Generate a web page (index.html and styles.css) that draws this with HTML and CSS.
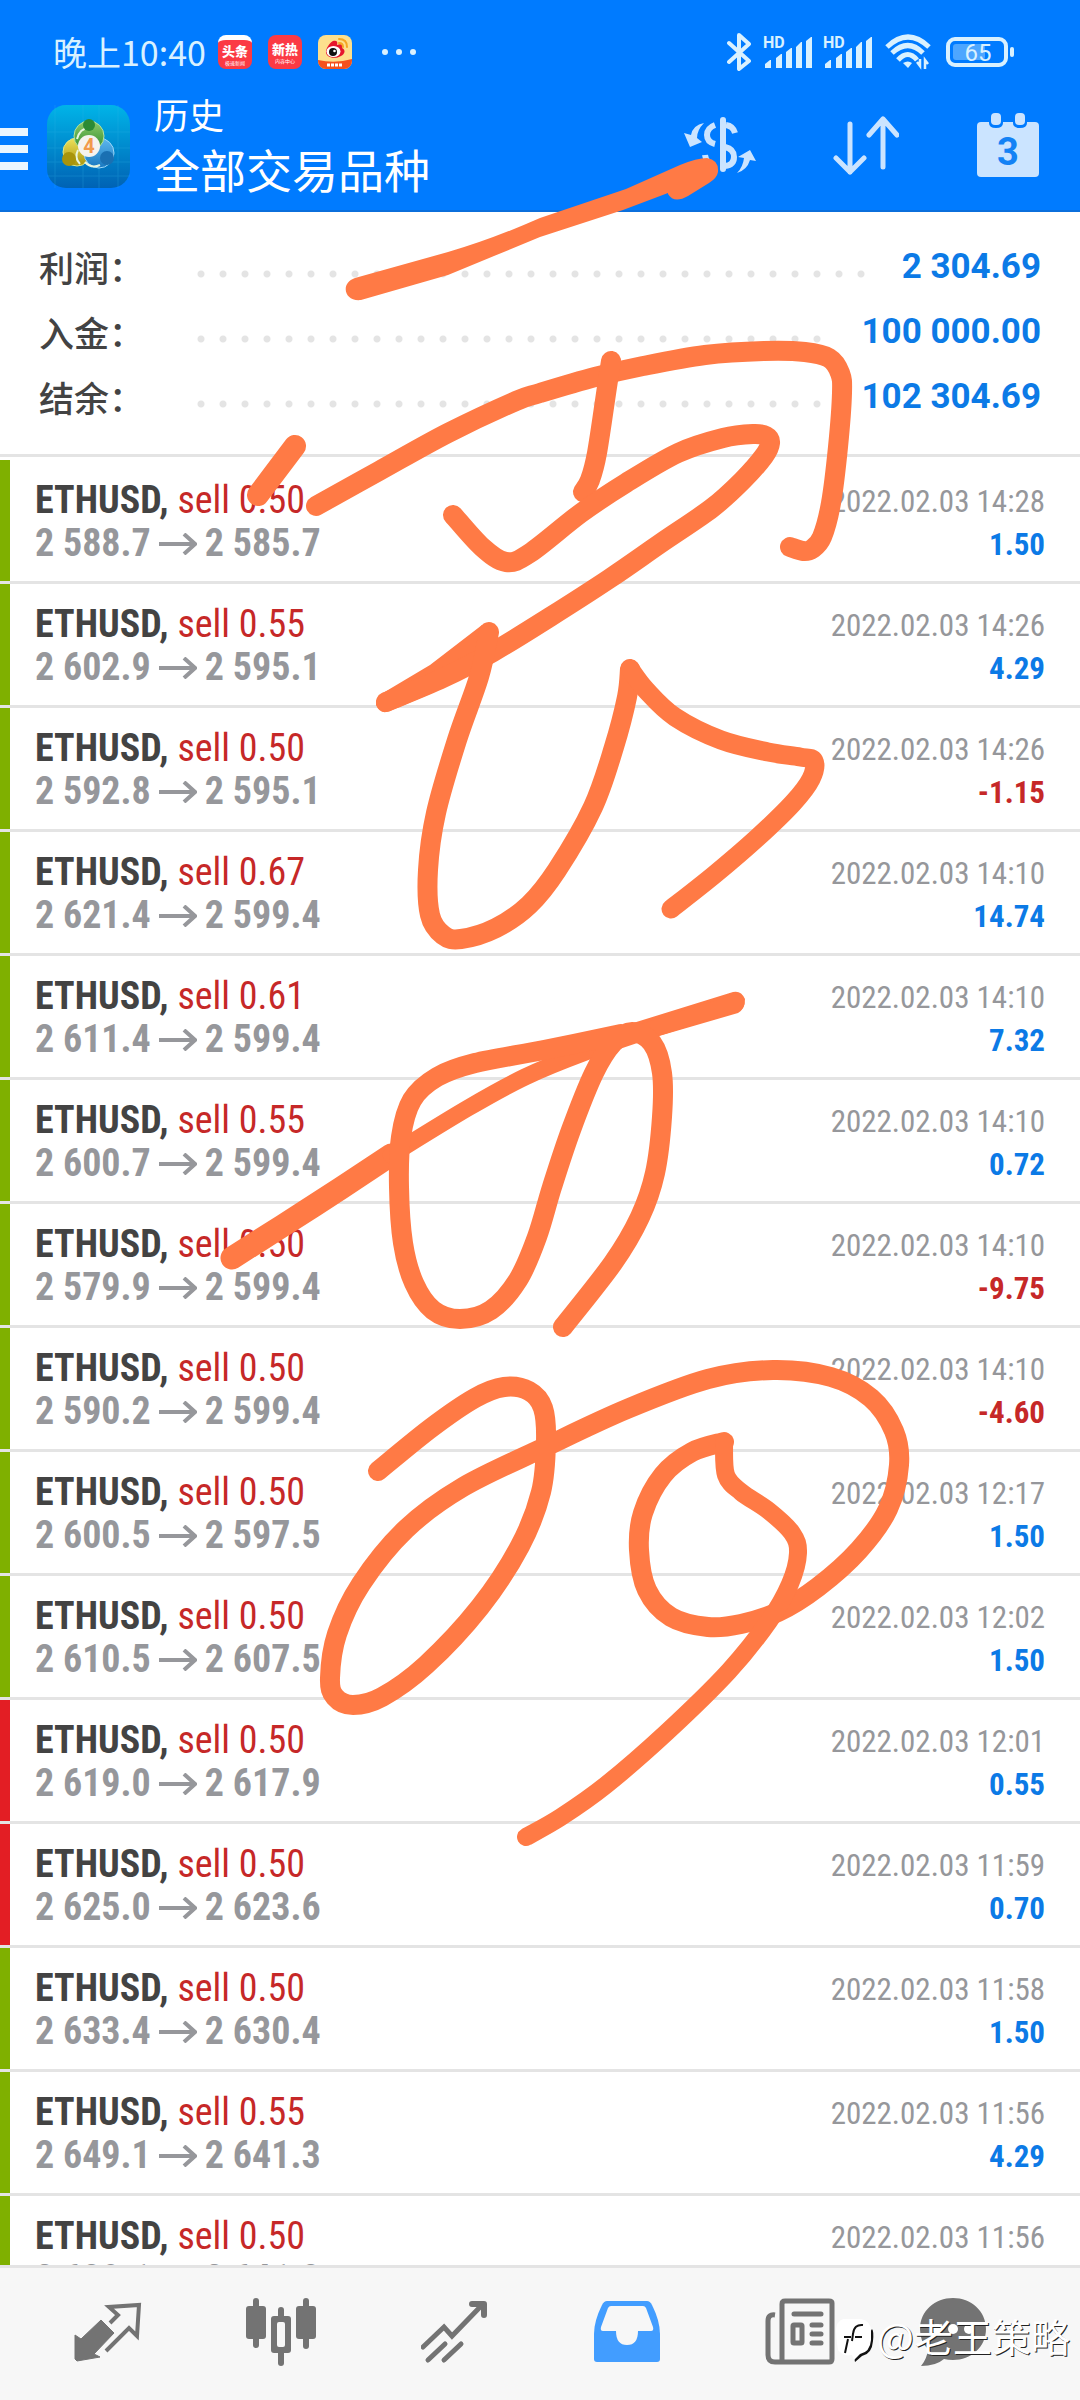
FILE: index.html
```html
<!DOCTYPE html>
<html lang="zh-CN">
<head>
  <meta charset="UTF-8" />
  <meta name="viewport" content="width=device-width, initial-scale=1.0"/>
  <title>历史 - 全部交易品种</title>
  <link rel="stylesheet" href="styles.css">
</head>
<body>

  <header class="top">
    <div class="status-bar">
      <span class="time">晚上10:40</span>
      <div class="notif">
        <span class="app-icon toutiao"><b>头条</b><i>极速新闻</i></span>
        <span class="app-icon xinre"><b>新热</b><i>内容中心</i></span>
        <svg class="weibo" width="34" height="34" viewBox="0 0 34 34">
          <rect width="34" height="34" rx="8" fill="#fddf8d"/>
          <path d="M0 25Q17 29 34 24V26a8 8 0 0 1-8 8H8a8 8 0 0 1-8-8z" fill="#f4511e"/>
          <path d="M15 6c4-1 5 1 4 4 4-2 7 0 5 3 4 2 3 6-1 8-7 4-16 1-15-5 1-5 5-9 7-10z" fill="#e6162d"/>
          <ellipse cx="15.500" cy="16.500" rx="7" ry="5.500" fill="#fff"/>
          <circle cx="15" cy="17" r="4" fill="#111"/>
          <circle cx="16.500" cy="16" r="1.300" fill="#fff"/>
          <path d="M21 8q4 0 4 4M21 4q8 0 8 8" fill="none" stroke="#f5a623" stroke-width="2" stroke-linecap="round"/>
          <path d="M9 30h16" stroke="#fff" stroke-width="3" stroke-dasharray="3 1"/>
        </svg>
      </div>
      <svg class="more" width="36" height="8" viewBox="0 0 36 8" fill="#d9f1ff">
        <circle cx="4" cy="4" r="3"/><circle cx="18" cy="4" r="3"/><circle cx="32" cy="4" r="3"/>
      </svg>
      <div class="signals">
        <svg width="24" height="40" viewBox="0 0 24 40" fill="none" stroke="#d9f1ff" stroke-width="4" stroke-linecap="round" stroke-linejoin="round">
          <path d="M2 11L22 29L12 37V3L22 12L2 30"/>
        </svg>
        <svg class="sim" width="50" height="34" viewBox="0 0 50 34" fill="#d9f1ff">
          <text x="0" y="13" class="hd">HD</text>
          <path d="M2 33v-4l5-4h1v8zM13 33V23l5-4h1v14zM23 33V17l5-4h1v20zM33 33V12l5-5h1v26zM43 33V6l5-4h1v31z"/>
        </svg>
        <svg class="sim" width="50" height="34" viewBox="0 0 50 34" fill="#d9f1ff">
          <text x="0" y="13" class="hd">HD</text>
          <path d="M2 33v-4l5-4h1v8zM13 33V23l5-4h1v14zM23 33V17l5-4h1v20zM33 33V12l5-5h1v26zM43 33V6l5-4h1v31z"/>
        </svg>
        <svg class="wifi" width="46" height="36" viewBox="0 0 46 36" fill="none" stroke="#d9f1ff" stroke-width="5">
          <path d="M2 13Q23-7 44 13M7 19Q23 4 38 19M13 26Q23 15 32 26"/>
          <path d="M18 29q5-3 9 0l-4 5z" fill="#d9f1ff" stroke="none"/>
          <path d="M32 28l3 4v-7M43 30l-3-4v9" stroke-width="2.500"/>
        </svg>
        <svg width="68" height="32" viewBox="0 0 68 32">
          <rect x="2" y="3" width="58" height="26" rx="7" fill="none" stroke="#d9f1ff" stroke-width="4"/>
          <rect x="7" y="8" width="32" height="16" rx="3" fill="#4da6ff"/>
          <rect x="64" y="11" width="4" height="10" rx="2" fill="#d9f1ff"/>
          <text x="32" y="25" class="level">65</text>
        </svg>
      </div>
    </div>

    <div class="app-bar">
      <button class="menu" aria-label="菜单"><span></span><span></span><span></span></button>
      <svg class="logo" width="83" height="83" viewBox="0 0 83 83">
        <defs>
          <linearGradient id="sky" x1="0" y1="0" x2="0" y2="1"><stop offset="0" stop-color="#00b4e8"/><stop offset="1" stop-color="#0062b4"/></linearGradient>
          <linearGradient id="g" x1="0" y1="0" x2="0" y2="1"><stop offset="0" stop-color="#8ecb6a"/><stop offset="1" stop-color="#2c8a2c"/></linearGradient>
          <linearGradient id="y" x1="0" y1="0" x2="0" y2="1"><stop offset="0" stop-color="#efe25c"/><stop offset="1" stop-color="#a8940c"/></linearGradient>
          <linearGradient id="b" x1="0" y1="0" x2="0" y2="1"><stop offset="0" stop-color="#5fb8ee"/><stop offset="1" stop-color="#1878c0"/></linearGradient>
        </defs>
        <rect width="83" height="83" rx="19" fill="url(#sky)"/>
        <path d="M8 0v83M36 0v83M52 0v83M71 0v83M0 27h83M0 43h83M0 57h83M0 71h83" stroke="#35b5e8" stroke-width="1" opacity=".25"/>
        <circle cx="30" cy="47" r="14" fill="url(#y)" stroke="#dbe88a"/>
        <circle cx="52" cy="48" r="15" fill="url(#b)" stroke="#9ed8f8"/>
        <circle cx="42" cy="31" r="15" fill="url(#g)" stroke="#b5e3a0"/>
        <path d="M30 34q3-11 12-11M33 59q-6-6-2-14M38 57q6 7 15 3" fill="none" stroke="#e7f5df" stroke-width="2"/>
        <circle cx="42" cy="20" r="6" fill="#2c8a34"/>
        <circle cx="22" cy="54" r="7" fill="#a8940c"/>
        <circle cx="60" cy="53" r="7" fill="#1a70b2"/>
        <circle cx="42" cy="41" r="11" fill="#f6f3ee"/>
        <text x="42" y="48" class="four">4</text>
      </svg>
      <h1 class="titles"><small>历史</small>全部交易品种</h1>
      <div class="actions">
        <button aria-label="货币">
          <svg width="72" height="60" viewBox="0 0 72 60" fill="none" stroke="#cbe4ff" stroke-width="6">
            <path d="M39 5v49" stroke-linecap="round"/>
            <path d="M31 10q-8 3-8 10t8 9M42 10q7 1 9 8M21 40q1 8 10 12M41 32q9 2 9 10t-9 9"/>
            <path d="M20 8Q9 10 7 20L0 18L6 32L18 27L13 23Q13 15 20 8zM53 58Q59 52 60 43L54 42L66 35L72 46L66 45Q63 55 53 58z" fill="#cbe4ff" stroke="none"/>
          </svg>
        </button>
        <button aria-label="排序">
          <svg width="66" height="60" viewBox="0 0 66 60" fill="none" stroke="#cbe4ff" stroke-width="5" stroke-linecap="round" stroke-linejoin="round">
            <path d="M17 9v48M3 43l14 14 14-14M50 52V4M36 20L50 4l14 16"/>
          </svg>
        </button>
        <button aria-label="日期">
          <svg width="64" height="66" viewBox="0 0 64 66">
            <rect x="1" y="10" width="62" height="55" rx="4" fill="#cbe4ff"/>
            <path d="M13 9v2q0 5 7 5t7-5V9zM37 9v2q0 5 7 5t7-5V9z" fill="#007bff"/>
            <rect x="15" y="1" width="10" height="12" rx="4" fill="#cbe4ff"/>
            <rect x="39" y="1" width="10" height="12" rx="4" fill="#cbe4ff"/>
            <text x="32" y="53" class="day">3</text>
          </svg>
        </button>
      </div>
    </div>
  </header>

  <dl class="summary">
    <div><dt>利润：</dt><dd>2 304.69</dd></div>
    <div><dt>入金：</dt><dd>100 000.00</dd></div>
    <div><dt>结余：</dt><dd>102 304.69</dd></div>
  </dl>

  <ul class="deals" id="dealList">
    <!-- Daftar transaksi -->
  </ul>

  <nav class="tabs">
    <a href="#quotes" aria-label="行情">
      <svg width="68" height="68" viewBox="0 0 68 68" fill="#737373">
        <path d="M27 22L40 35L20 56L26 59L3 63L1 61V37L7 41z" stroke="#737373" stroke-width="1" stroke-linejoin="round"/>
        <path d="M36 25L44 17L35 9L65 7L63 38L55 30L32 53" fill="none" stroke="#737373" stroke-width="4"/>
      </svg>
    </a>
    <a href="#chart" aria-label="图表">
      <svg width="70" height="68" viewBox="0 0 70 68" fill="#737373">
        <rect y="8" width="20" height="33" rx="3"/><rect x="7" width="6" height="50" rx="3"/>
        <rect x="50" y="8" width="20" height="33" rx="3"/><rect x="57" width="6" height="51" rx="3"/>
        <rect x="32" y="9" width="6" height="59" rx="3"/><rect x="25" y="18" width="20" height="37" rx="3"/>
        <rect x="31" y="24" width="8" height="25" rx="2" fill="#f7f7f7"/>
      </svg>
    </a>
    <a href="#trade" aria-label="交易">
      <svg width="66" height="68" viewBox="0 0 66 68" fill="none" stroke="#737373" stroke-width="5" stroke-linecap="round">
        <path d="M2 49L23 29L31 38L61 7"/>
        <path d="M51 6H63V17" stroke-width="6" stroke-linejoin="round"/>
        <path d="M7 62L24 46M23 62L40 46"/>
      </svg>
    </a>
    <a href="#history" aria-label="历史">
      <svg width="68" height="68" viewBox="0 0 68 68">
        <path d="M14 3H54Q57 3 59 7Q67 23 67 36V61Q67 64 64 64H4Q1 64 1 61V36Q1 23 9 7Q11 3 14 3z" fill="#429dff"/>
        <path d="M18 8H50Q52 8 53 10L60 29Q61 33 58 33H45Q45 47 34 47T23 33H10Q7 33 8 29L15 10Q16 8 18 8z" fill="#f7f7f7"/>
      </svg>
    </a>
    <a href="#news" aria-label="新闻">
      <svg width="70" height="68" viewBox="0 0 70 68" fill="none" stroke="#737373" stroke-width="5">
        <path d="M10 17Q3 16 3 23V57Q3 64 10 64H64Q67 64 67 61V5Q67 3 64 3H20Q17 3 17 6V64"/>
        <path d="M29 16H56M47 27H56M47 36H56M47 45H56" stroke-linecap="round"/>
        <rect x="28" y="27" width="9" height="18" rx="1"/>
      </svg>
    </a>
    <a href="#chat" aria-label="聊天">
      <svg width="66" height="68" viewBox="0 0 66 68">
        <path d="M33 0C51 0 66 13 66 31S51 62 33 62Q28 62 24 61Q16 68 1 68Q7 61 8 51Q0 44 0 31C0 13 15 0 33 0z" fill="#737373"/>
        <circle cx="17" cy="31" r="5" fill="#fff"/><circle cx="33" cy="31" r="5" fill="#fff"/><circle cx="49" cy="31" r="5" fill="#fff"/>
      </svg>
    </a>
  </nav>

  <div class="watermark">
    <svg width="40" height="46" viewBox="0 0 40 46">
      <path d="M37 12Q39 14 38 24Q37 37 27 39L20 45L19 40" fill="#111"/>
      <path d="M8 2H26Q36 4 36 14V23Q35 35 25 37L19 43L17 38Q8 40 3 33Q1 20 1 12Q2 4 8 2z" fill="#fff"/>
      <path d="M28 8Q19 7 18 17L17 24M9 20H16M20 20H27M13 22L10 36" fill="none" stroke="#111" stroke-width="2"/>
    </svg>
    <span>@老王策略</span>
  </div>

  <!-- coretan tangan di atas layar -->
  <svg class="doodle" id="doodle" viewBox="0 0 1080 2400" preserveAspectRatio="xMidYMin meet">
    <path class="fill" d="M355 278L448 252Q490 240 540 218L626 189L680 165Q697 158 707 158Q719 160 718 172Q717 178 709 183L688 196Q674 204 668 194V193L623 210L540 237L448 275L361 300C344 302 340 283 355 278z"/>
    <path class="fill" d="M482 625L430 665L388 690Q375 696 376 705Q380 715 390 711L430 694L480 668L500 640z"/>
    <path class="fill" d="M544 1046L617 1028L733 992Q741 990 745 999Q745 1009 738 1013L659 1036L583 1058z"/>
  </svg>

  <script>
    const deals = [
      ['0.50', '2 588.7', '2 585.7', '14:28', '1.50'],
      ['0.55', '2 602.9', '2 595.1', '14:26', '4.29'],
      ['0.50', '2 592.8', '2 595.1', '14:26', '-1.15'],
      ['0.67', '2 621.4', '2 599.4', '14:10', '14.74'],
      ['0.61', '2 611.4', '2 599.4', '14:10', '7.32'],
      ['0.55', '2 600.7', '2 599.4', '14:10', '0.72'],
      ['0.50', '2 579.9', '2 599.4', '14:10', '-9.75'],
      ['0.50', '2 590.2', '2 599.4', '14:10', '-4.60'],
      ['0.50', '2 600.5', '2 597.5', '12:17', '1.50'],
      ['0.50', '2 610.5', '2 607.5', '12:02', '1.50'],
      ['0.50', '2 619.0', '2 617.9', '12:01', '0.55', 'stop'],
      ['0.50', '2 625.0', '2 623.6', '11:59', '0.70', 'stop'],
      ['0.50', '2 633.4', '2 630.4', '11:58', '1.50'],
      ['0.55', '2 649.1', '2 641.3', '11:56', '4.29'],
      ['0.50', '2 639.1', '2 641.3', '11:56', '-1.10']
    ];
    const list = document.getElementById('dealList');

    deals.forEach(([lot, open, close, time, profit, mark]) => {
      const item = document.createElement('li');
      item.className = 'deal ' + (mark || '');
      item.innerHTML = `
        <div class="deal-left">
          <p><b>ETHUSD,</b> <span class="sell">sell ${lot}</span></p>
          <p class="prices">${open}<svg width="38" height="22" viewBox="0 0 38 22"><path d="M0 11H36M25 1L36 11L25 21"/></svg>${close}</p>
        </div>
        <div class="deal-right">
          <time>2022.02.03 ${time}</time>
          <p class="profit ${profit < 0 ? 'minus' : ''}">${profit}</p>
        </div>
      `;
      list.appendChild(item);
    });

    // [tebal garis, titik-titik]
    const strokes = [
      [22, '295,446 258,495'],
      [20, '316,506 379,471 448,433 516,401 540,393 595,377 643,366 705,355 764,351 805,352 829,358 840,373 842,393 838,447 831,503 822,537 812,549 803,551 790,547'],
      [20, '611,361 607,387 597,453 590,480 583,492'],
      [20, '453,515 482,547 506,562 530,553 581,513 626,483 678,453 723,438 753,434 766,436 770,443 764,456 743,480 712,508 661,543 609,579 550,617 493,652 443,678 386,702'],
      [20, '489,632 479,677 457,740 436,813 428,870 430,915 443,935 461,939 496,928 529,905 557,870 593,807 614,747 627,697 630,669'],
      [19, '630,669 646,690 675,717 721,740 768,752 800,757 814,761 811,779 793,803 757,838 714,875 671,909'],
      [23, '232,1258 315,1205 391,1155'],
      [17, '391,1155 468,1108 525,1077 583,1053 659,1027 736,1003'],
      [20, '621,1034 544,1050 475,1063 437,1077 412,1100 401,1137 399,1187 403,1243 414,1283 433,1310 460,1319 491,1310 518,1280 537,1237 552,1187 571,1130 594,1073 613,1043 632,1032 652,1043 662,1073 662,1117 655,1173 640,1217 613,1263 563,1327'],
      [20, '378,1471 431,1428 475,1398 504,1387 529,1391 543,1408 546,1442 541,1492 520,1546 480,1607 426,1665 382,1697 353,1705 335,1697 330,1678 337,1634 361,1584 406,1529 463,1487 545,1447 627,1409 708,1379 773,1370 831,1377 871,1398 894,1431 899,1465 888,1509 859,1550 818,1587 778,1612 741,1624 708,1627 671,1617 647,1590 639,1550 643,1513 663,1475 692,1452 724,1442'],
      [18, '724,1442 726,1475 741,1492 769,1511 792,1533 798,1553 790,1584 769,1621 729,1671 667,1732 606,1785 561,1817 526,1837']
    ];

    strokes.forEach(([width, points]) => {
      const p = points.split(' ').map(s => s.split(',').map(Number));
      let d = `M${p[0]}`;
      for (let i = 0; i < p.length - 1; i++) {
        const a = p[i - 1] || p[i], b = p[i], c = p[i + 1], e = p[i + 2] || c;
        d += `C${b[0] + (c[0] - a[0]) / 6},${b[1] + (c[1] - a[1]) / 6} ${c[0] - (e[0] - b[0]) / 6},${c[1] - (e[1] - b[1]) / 6} ${c}`;
      }
      const path = document.createElementNS('http://www.w3.org/2000/svg', 'path');
      path.setAttribute('d', d);
      path.setAttribute('stroke-width', width);
      document.getElementById('doodle').appendChild(path);
    });
  </script>
</body>
</html>
```
FILE: styles.css
```css
* {
  box-sizing: border-box;
}
body {
  position: relative;
  display: flex;
  flex-direction: column;
  height: 100vh;
  margin: 0;
  overflow: hidden;
  background: #fff;
  color: #434343;
  font-family: Roboto, "Noto Sans CJK SC", sans-serif;
}
p, ul, dl, dd, h1 {
  margin: 0;
  padding: 0;
}
svg {
  display: block;
  flex: none;
}
button {
  padding: 0;
  border: none;
  background: none;
  cursor: pointer;
}

/* header */
.top {
  flex: none;
  background: #007bff;
  border-bottom: 2px solid #0b6fdc;
  color: #fff;
}
.status-bar {
  display: flex;
  align-items: center;
  height: 104px;
  padding: 0 66px 0 53px;
  color: #d9f1ff;
}
.time {
  font: 34px/40px "Noto Sans CJK SC", sans-serif;
}
.notif {
  display: flex;
  gap: 16px;
  margin-left: 12px;
}
.app-icon {
  display: flex;
  flex-direction: column;
  align-items: center;
  width: 34px;
  height: 34px;
  padding-top: 6px;
  border-radius: 8px;
  background: #fb3a44;
  color: #fff;
  font-family: "Noto Sans CJK SC", sans-serif;
  line-height: 16px;
}
.app-icon b {
  font-size: 13px;
  font-weight: 900;
}
.app-icon i {
  font-size: 5px;
  font-style: normal;
  line-height: 8px;
}
.toutiao {
  border-top: 5px solid #fff;
  padding-top: 3px;
}
.more {
  margin-left: 29px;
}
.signals {
  display: flex;
  align-items: center;
  margin-left: auto;
}
.sim {
  margin-left: 12px;
  overflow: visible;
}
.sim + .sim {
  margin-left: 10px;
}
.wifi {
  margin: 0 15px 0 12px;
}
.hd {
  font: bold 16px Roboto, sans-serif;
}
.level {
  font: 24px Roboto, sans-serif;
  text-anchor: middle;
  fill: #d9f1ff;
}
.app-bar {
  display: flex;
  align-items: flex-start;
  height: 106px;
}
.menu {
  display: flex;
  flex-direction: column;
  gap: 9px;
  width: 28px;
  margin-top: 24px;
}
.menu span {
  height: 8px;
  background: #ebf6ff;
}
.logo {
  margin: 1px 0 0 19px;
}
.four {
  font: bold 20px Roboto, sans-serif;
  text-anchor: middle;
  fill: #f29a4a;
}
.titles {
  margin-left: 24px;
  margin-top: -12px;
  font: 46px/56px "Noto Sans CJK SC", sans-serif;
}
.titles small {
  display: block;
  margin-bottom: 4px;
  font-size: 35px;
  line-height: 44px;
}
.actions {
  display: flex;
  align-items: center;
  gap: 77px;
  margin: 8px 40px 0 auto;
}
.day {
  font: bold 38px Roboto, sans-serif;
  text-anchor: middle;
  fill: #1482f5;
}

/* ringkasan */
.summary {
  flex: none;
  padding: 22px 39px 25px;
  border-bottom: 3px solid #e4e4e4;
}
.summary div {
  display: flex;
  align-items: center;
  height: 65px;
}
.summary dt {
  width: 151px;
  font: 500 35px/64px "Noto Sans CJK SC", sans-serif;
}
.summary dd {
  display: flex;
  flex: 1;
  color: #0c7ae6;
  font: bold 35px/70px Roboto, sans-serif;
}
.summary dd::before {
  content: "";
  flex: 1;
  height: 8px;
  margin: 38px 32px 0 0;
  background: radial-gradient(circle, #e4e4e4 3px, transparent 4px) 0 0 / 22px 8px repeat-x;
}

/* daftar transaksi */
.deals {
  flex: 1;
  min-height: 0;
  padding-top: 3px;
  overflow: hidden;
  list-style: none;
  font-family: "Roboto Condensed", "Liberation Sans Narrow", sans-serif;
}
.deal {
  display: flex;
  justify-content: space-between;
  height: 124px;
  padding: 19px 35px 0;
  border-bottom: 3px solid #e4e4e4;
  box-shadow: inset 10px 0 #7fb000;
}
.deal.stop {
  box-shadow: inset 10px 0 #e31e24;
}
.deal-left {
  font-size: 38px;
  line-height: 43px;
}
.sell {
  color: #c62828;
}
.prices {
  display: flex;
  align-items: center;
  color: #96979b;
  font-weight: bold;
}
.prices svg {
  margin: 0 8px;
  fill: none;
  stroke: #96979b;
  stroke-width: 4px;
}
.deal-right {
  padding-top: 1px;
  text-align: right;
  font-size: 31px;
  line-height: 43px;
}
.deal-right time {
  color: #96979b;
}
.profit {
  color: #0c7ae6;
  font-weight: bold;
}
.profit.minus {
  color: #c62828;
}

/* menu bawah */
.tabs {
  display: flex;
  flex: none;
  height: 135px;
  padding: 30px 60px 0 22px;
  border-top: 3px solid #e4e4e4;
  background: #f7f7f7;
}
.tabs a {
  display: flex;
  flex: 13;
  justify-content: center;
}
.tabs a:last-child {
  flex: 10;
}
.watermark {
  position: absolute;
  right: 10px;
  bottom: 37px;
  display: flex;
  align-items: flex-end;
  gap: 2px;
  color: #fff;
  font: 39px/56px "Noto Sans CJK SC", sans-serif;
  text-shadow: 1px 1px 0 #222;
}
.doodle {
  position: absolute;
  top: 0;
  left: 0;
  width: 100%;
  pointer-events: none;
  fill: none;
  stroke: #ff7a45;
  stroke-linecap: round;
  stroke-linejoin: round;
}
.doodle .fill {
  fill: #ff7a45;
  stroke: none;
}
```
